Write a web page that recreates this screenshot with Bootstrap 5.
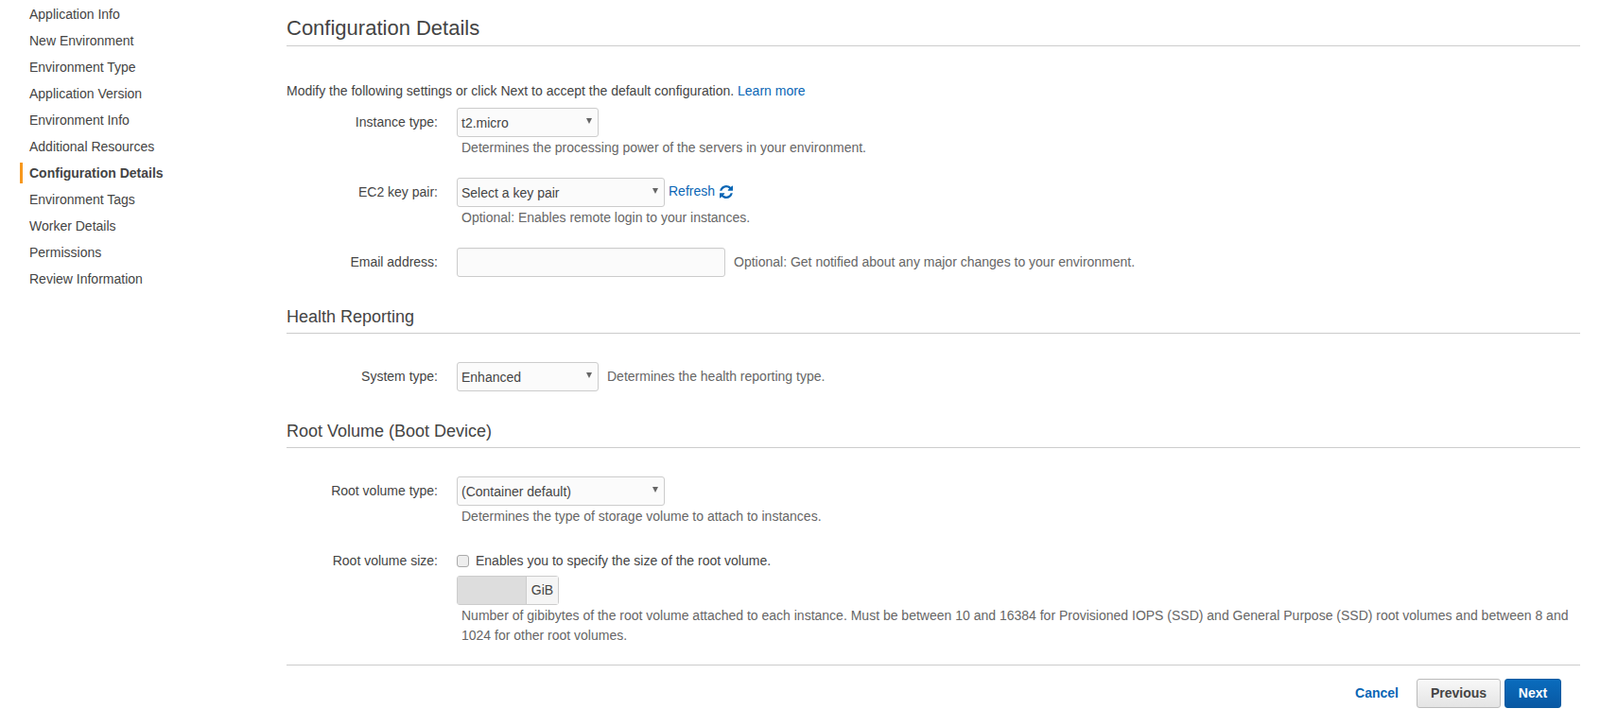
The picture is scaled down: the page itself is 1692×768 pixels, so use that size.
<!DOCTYPE html>
<html lang="en">
<head>
<meta charset="utf-8">
<title>Configuration Details</title>
<link href="https://cdn.jsdelivr.net/npm/bootstrap@5.3.0/dist/css/bootstrap.min.css" rel="stylesheet">
<style>
html, body { height: 768px; overflow: hidden; }
body { font-family: "Liberation Sans", Arial, sans-serif; font-size: 14px; line-height: 21px; color: #444; background: #fff; }
a { color: #0a66b5; text-decoration: none; }
.side-nav { width: 303px; flex: none; padding: 1px 0 0 21px; }
.side-nav a { display: block; height: 28px; line-height: 28px; padding-left: 10px; color: #444; }
.side-nav a.now { font-weight: 700; border-left: 3px solid #f7981d; padding-left: 7px; height: 22px; line-height: 22px; margin: 3px 0; }
.main-pane { width: 1368px; flex: none; }
.sec-head { font-size: 22px; line-height: 26px; font-weight: 400; color: #444; margin: 0; padding: 17px 0 5px; border-bottom: 1px solid #ccc; }
.sec-sub { font-size: 18px; line-height: 22px; padding: 0 0 6px; margin-top: 31px; }
.intro { margin: 37px 0 7px; }
.field { display: flex; align-items: flex-start; }
.field-label { width: 160px; flex: none; margin: 0 20px 0 0; text-align: right; line-height: 31px; }
.pick { height: 31px; border: 1px solid #ccc; border-radius: 3px; background: #fbfbfb; color: #444; font-size: 14px; padding: 1px 4px 0; display: inline-flex; align-items: center; justify-content: space-between; }
.caret-mark { width: 0; height: 0; border-left: 3px solid transparent; border-right: 3px solid transparent; border-top: 6px solid #666; margin: 0 2px 4px 0; }
.w-s { width: 150px; }
.w-m { width: 220px; }
.text-in { width: 284px; height: 31px; border: 1px solid #ccc; border-radius: 3px; background: #fbfbfb; box-shadow: inset 0 1px 1px rgba(0,0,0,.04); }
.hint { color: #666; padding: 1px 0 0 5px; }
.hint-in { color: #666; line-height: 31px; margin-left: 9px; }
.refresh { margin-left: 4px; line-height: 27px; height: 29px; display: inline-flex; align-items: center; gap: 5px; }
.gib { display: flex; width: 108px; height: 31px; border: 1px solid #ccc; border-radius: 3px; }
.gib-in { width: 73px; background: #ddd; border-right: 1px solid #ccc; }
.gib-unit { flex: 1; text-align: center; line-height: 29px; background: #f5f5f5; color: #444; }
.tick { width: 13px; height: 13px; border: 1px solid #aaa; border-radius: 3px; background: #eee; margin-right: 7px; flex: none; }
.tick-row { height: 31px; }
.foot-line { border-top: 1px solid #ccc; margin-top: 20px; padding: 14px 20px 0 0; }
.pv-btn, .nx-btn { height: 31px; border-radius: 3px; font-weight: 700; font-size: 14px; padding: 0; line-height: 29px; }
.pv-btn { width: 89px; border: 1px solid #bbb; background: linear-gradient(#f8f8f8, #e4e4e4); color: #444; }
.nx-btn { width: 60px; border: 1px solid #0a5aa0; background: linear-gradient(#0a6cbd, #0858a3); color: #fff; }
.cancel-lnk { font-weight: 700; margin-right: 15px; }
.field-gap-a { margin-top: 21px; }
.field-gap-c { margin-top: 30px; }
</style>
</head>
<body class="m-0">
<div class="d-flex">
  <nav class="side-nav">
    <a href="#">Application Info</a>
    <a href="#">New Environment</a>
    <a href="#">Environment Type</a>
    <a href="#">Application Version</a>
    <a href="#">Environment Info</a>
    <a href="#">Additional Resources</a>
    <a href="#" class="now">Configuration Details</a>
    <a href="#">Environment Tags</a>
    <a href="#">Worker Details</a>
    <a href="#">Permissions</a>
    <a href="#">Review Information</a>
  </nav>
  <main class="main-pane">
    <h1 class="sec-head">Configuration Details</h1>
    <p class="intro">Modify the following settings or click Next to accept the default configuration. <a href="#">Learn more</a></p>

    <div class="field">
      <label class="field-label">Instance type:</label>
      <div>
        <div class="pick w-s"><span>t2.micro</span><i class="caret-mark"></i></div>
        <div class="hint">Determines the processing power of the servers in your environment.</div>
      </div>
    </div>

    <div class="field field-gap-a">
      <label class="field-label">EC2 key pair:</label>
      <div>
        <div class="d-flex">
          <div class="pick w-m"><span>Select a key pair</span><i class="caret-mark"></i></div>
          <a href="#" class="refresh">Refresh
            <svg width="14" height="14" viewBox="128 128 1536 1536" aria-hidden="true"><path fill="#0a66b5" d="M1639 1056q0 5-1 7-64 268-268 434.5t-478 166.5q-146 0-282.5-55t-243.5-157l-129 129q-19 19-45 19t-45-19-19-45v-448q0-26 19-45t45-19h448q26 0 45 19t19 45-19 45l-137 137q71 66 161 102t187 36q134 0 250-65t186-179q11-17 53-117 8-23 30-23h192q13 0 22.5 9.5t9.5 22.5zm25-800v448q0 26-19 45t-45 19h-448q-26 0-45-19t-19-45 19-45l138-138q-148-137-349-137-134 0-250 65t-186 179q-11 17-53 117-8 23-30 23h-199q-13 0-22.5-9.5t-9.5-22.5v-7q65-268 270-434.5t480-166.5q146 0 284 55.5t245 156.5l130-129q19-19 45-19t45 19 19 45z"/></svg>
          </a>
        </div>
        <div class="hint">Optional: Enables remote login to your instances.</div>
      </div>
    </div>

    <div class="field field-gap-a">
      <label class="field-label">Email address:</label>
      <div class="text-in"></div>
      <div class="hint-in">Optional: Get notified about any major changes to your environment.</div>
    </div>

    <h2 class="sec-head sec-sub">Health Reporting</h2>

    <div class="field field-gap-c">
      <label class="field-label">System type:</label>
      <div class="pick w-s"><span>Enhanced</span><i class="caret-mark"></i></div>
      <div class="hint-in">Determines the health reporting type.</div>
    </div>

    <h2 class="sec-head sec-sub">Root Volume (Boot Device)</h2>

    <div class="field field-gap-c">
      <label class="field-label">Root volume type:</label>
      <div>
        <div class="pick w-m"><span>(Container default)</span><i class="caret-mark"></i></div>
        <div class="hint">Determines the type of storage volume to attach to instances.</div>
      </div>
    </div>

    <div class="field field-gap-a">
      <label class="field-label">Root volume size:</label>
      <div class="flex-grow-1">
        <div class="d-flex align-items-center tick-row"><span class="tick"></span>Enables you to specify the size of the root volume.</div>
        <div class="gib"><div class="gib-in"></div><div class="gib-unit">GiB</div></div>
        <div class="hint">Number of gibibytes of the root volume attached to each instance. Must be between 10 and 16384 for Provisioned IOPS (SSD) and General Purpose (SSD) root volumes and between 8 and 1024 for other root volumes.</div>
      </div>
    </div>

    <div class="foot-line d-flex justify-content-end align-items-center gap-1">
      <a href="#" class="cancel-lnk">Cancel</a>
      <button class="pv-btn" type="button">Previous</button>
      <button class="nx-btn" type="button">Next</button>
    </div>
  </main>
</div>
<script src="https://cdn.jsdelivr.net/npm/bootstrap@5.3.0/dist/js/bootstrap.bundle.min.js"></script>
</body>
</html>
